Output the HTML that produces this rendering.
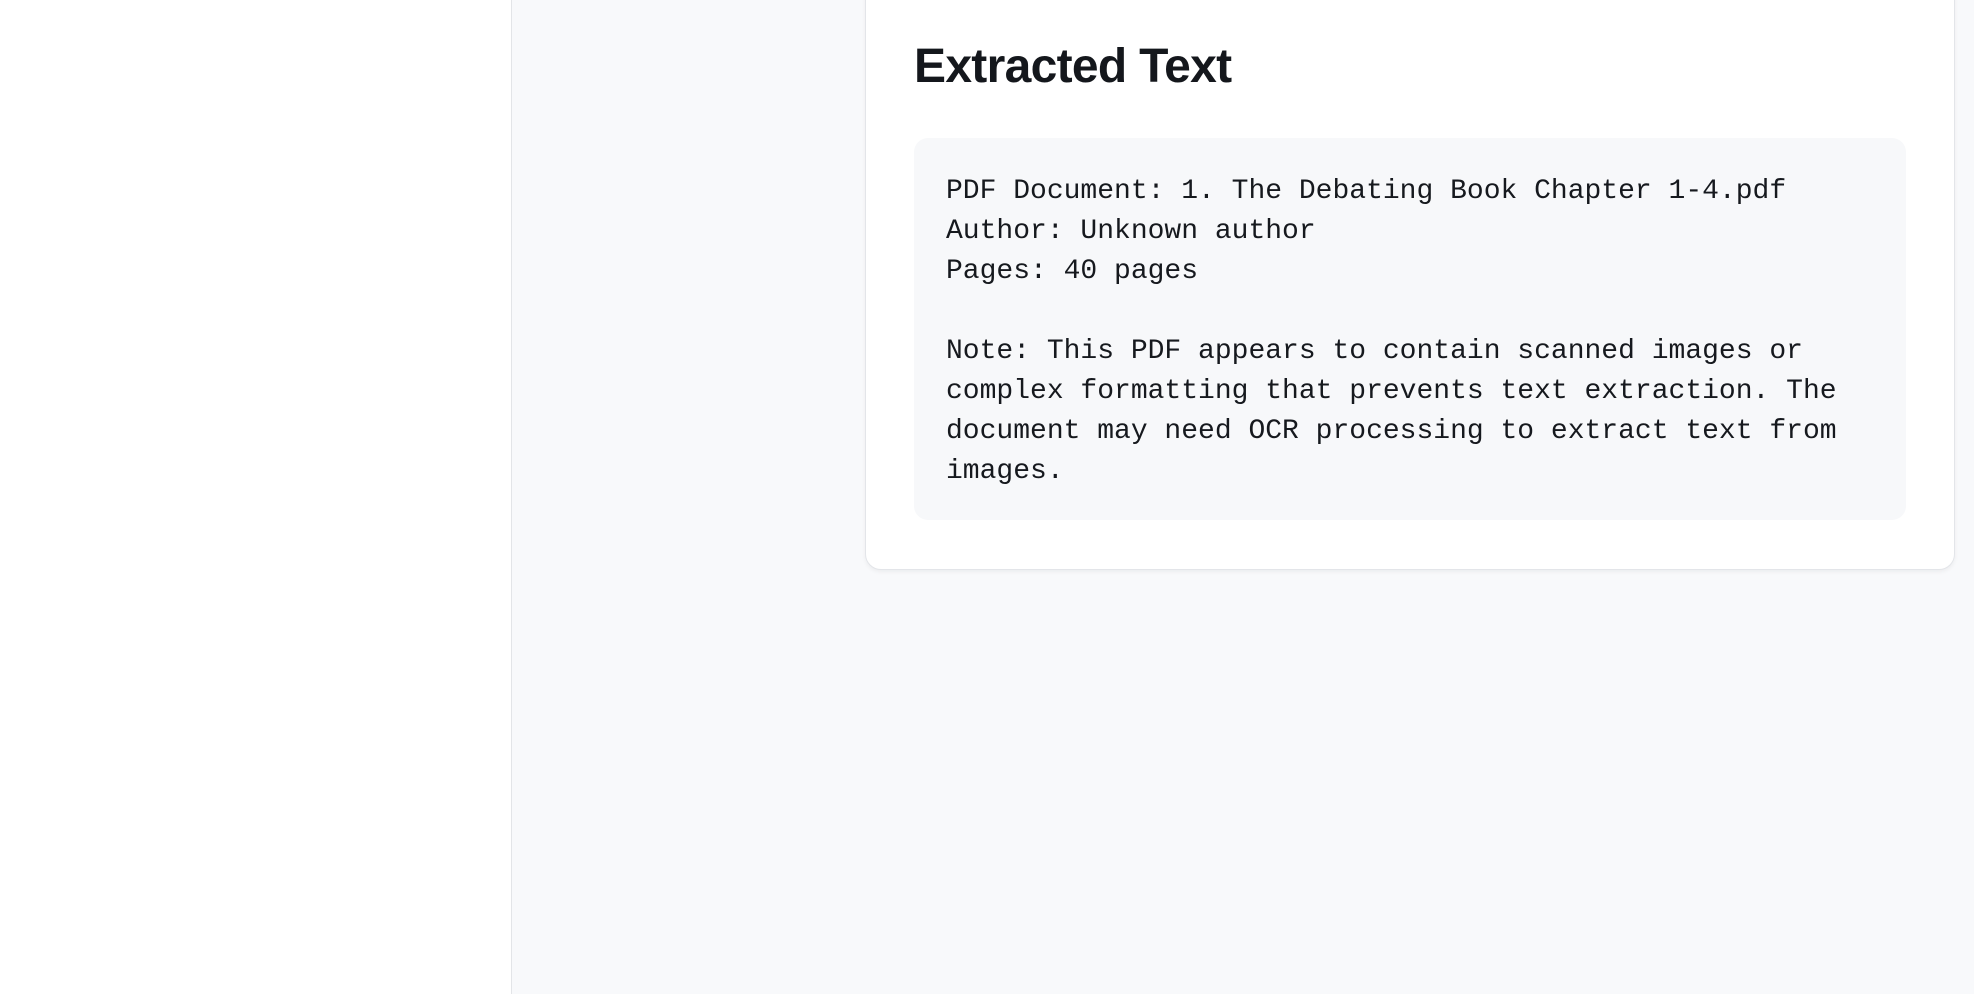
<!DOCTYPE html>
<html><head><meta charset="utf-8"><style>
html,body{margin:0;padding:0;width:1974px;height:994px;overflow:hidden;background:#f8f9fb;font-family:"Liberation Sans",sans-serif;}
.side{position:absolute;left:0;top:0;width:511px;height:994px;background:#fff;border-right:1px solid #e3e5e8;}
.card{position:absolute;left:865px;top:-30px;width:1088px;height:598px;background:#fff;border:1px solid #e3e5e9;border-radius:16px;box-shadow:0 2px 4px rgba(0,0,0,0.05);}
h1{position:absolute;left:914px;top:38px;margin:0;font-size:48px;line-height:58px;font-weight:bold;letter-spacing:-0.7px;color:#14171c;}
.box{position:absolute;left:914px;top:138px;width:992px;height:382px;background:#f7f8fa;border-radius:14px;}
pre{position:absolute;left:946px;top:172px;margin:0;font-family:"Liberation Mono",monospace;font-size:28px;line-height:40px;color:#16191e;}
</style></head><body>
<div class="side"></div>
<div class="card"></div>
<h1>Extracted Text</h1>
<div class="box"></div>
<pre>PDF Document: 1. The Debating Book Chapter 1-4.pdf
Author: Unknown author
Pages: 40 pages

Note: This PDF appears to contain scanned images or
complex formatting that prevents text extraction. The
document may need OCR processing to extract text from
images.</pre>
</body></html>
